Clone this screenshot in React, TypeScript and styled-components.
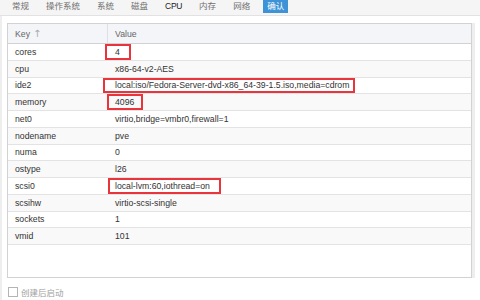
import React from 'react';
import styled, { createGlobalStyle } from 'styled-components';

const GlobalStyle = createGlobalStyle`
  html, body {
    margin: 0;
    padding: 0;
    background: #ffffff;
    font-family: "Liberation Sans", Arial, "Noto Sans CJK SC", sans-serif;
  }
`;

const Page = styled.div`
  width: 480px;
  height: 300px;
  overflow: hidden;
  display: flex;
  flex-direction: column;
`;

const TabBar = styled.div`
  height: 16px;
  display: flex;
  align-items: flex-start;
  gap: 9px;
  padding-left: 8px;
  background: #f5f5f5;
  border-bottom: 1px solid #e2e2e2;
  box-sizing: border-box;
`;

const Tab = styled.div<{ $active?: boolean; $latin?: boolean }>`
  height: 13px;
  line-height: 13px;
  padding: 0 4px;
  font-size: 8.5px;
  letter-spacing: ${(p) => (p.$latin ? '-0.3px' : '0')};
  font-family: "Liberation Sans", "Noto Sans CJK SC", sans-serif;
  color: ${(p) => (p.$active ? '#ffffff' : p.$latin ? '#222222' : '#707070')};
  background: ${(p) => (p.$active ? '#3d93d6' : 'transparent')};
`;

const Panel = styled.div`
  flex: 1;
  display: flex;
  flex-direction: column;
  padding: 7px 5px 0 5px;
  border-left: 2px solid #eeeeee;
`;

const GridWrap = styled.div`
  height: 255px;
  border-right: 3px solid #eeeeee;
  box-sizing: border-box;
`;

const Grid = styled.div`
  height: 100%;
  border: 1px solid #d2d2d2;
  box-sizing: border-box;
  display: flex;
  flex-direction: column;
`;

const HeaderRow = styled.div`
  height: 20px;
  display: grid;
  grid-template-columns: 100px 1fr;
  background: #f3f5f8;
  border-bottom: 1px solid #d2d2d2;
  box-sizing: border-box;
`;

const HeaderCell = styled.div<{ $divider?: boolean }>`
  display: flex;
  align-items: center;
  gap: 3px;
  padding-left: 7px;
  font-size: 8.7px;
  color: #666666;
  border-right: ${(p) => (p.$divider ? '1px solid #dcdfe3' : 'none')};
`;

const SortArrow = styled.span`
  color: #aaaaaa;
  font-family: "DejaVu Sans", sans-serif;
  font-size: 10px;
  line-height: 10px;
`;

const Row = styled.div<{ $odd: boolean }>`
  height: 16.75px;
  display: grid;
  grid-template-columns: 100px 1fr;
  background: ${(p) => (p.$odd ? '#f9f9f9' : '#ffffff')};
  border-bottom: 1px solid #e3e3e3;
  box-sizing: border-box;
`;

const Cell = styled.div`
  position: relative;
  display: flex;
  align-items: center;
  padding-left: 7px;
  font-size: 8.7px;
  color: #333333;
  white-space: nowrap;
`;

const Mark = styled.div<{ $left: number; $width: number }>`
  position: absolute;
  top: 0;
  bottom: 0;
  left: ${(p) => p.$left}px;
  width: ${(p) => p.$width}px;
  border: 2px solid #e8343a;
  box-sizing: border-box;
`;

const Footer = styled.label`
  display: flex;
  align-items: center;
  gap: 3px;
  padding: 8px 0 0 1px;
  font-size: 8.5px;
  font-family: "Noto Sans CJK SC", sans-serif;
  color: #a0a0a0;
`;

const CheckBox = styled.span`
  width: 8px;
  height: 8px;
  border: 1px solid #b4b4b4;
  background: #ffffff;
`;

type Item = { key: string; value: string; mark?: [number, number] };

const items: Item[] = [
  { key: 'cores', value: '4', mark: [-3, 26] },
  { key: 'cpu', value: 'x86-64-v2-AES' },
  { key: 'ide2', value: 'local:iso/Fedora-Server-dvd-x86_64-39-1.5.iso,media=cdrom', mark: [-5, 252] },
  { key: 'memory', value: '4096', mark: [-1, 36] },
  { key: 'net0', value: 'virtio,bridge=vmbr0,firewall=1' },
  { key: 'nodename', value: 'pve' },
  { key: 'numa', value: '0' },
  { key: 'ostype', value: 'l26' },
  { key: 'scsi0', value: 'local-lvm:60,iothread=on', mark: [0, 113] },
  { key: 'scsihw', value: 'virtio-scsi-single' },
  { key: 'sockets', value: '1' },
  { key: 'vmid', value: '101' },
];

const tabs = ['常规', '操作系统', '系统', '磁盘', 'CPU', '内存', '网络', '确认'];

const App = () => {
  return (
    <Page>
      <GlobalStyle />
      <TabBar>
        {tabs.map((t) => (
          <Tab key={t} $active={t === '确认'} $latin={t === 'CPU'}>
            {t}
          </Tab>
        ))}
      </TabBar>
      <Panel>
        <GridWrap>
          <Grid>
            <HeaderRow>
              <HeaderCell $divider>
                Key <SortArrow>↑</SortArrow>
              </HeaderCell>
              <HeaderCell>Value</HeaderCell>
            </HeaderRow>
            {items.map((it, i) => (
              <Row key={it.key} $odd={i % 2 === 1}>
                <Cell>{it.key}</Cell>
                <Cell>
                  {it.value}
                  {it.mark && <Mark $left={it.mark[0]} $width={it.mark[1]} />}
                </Cell>
              </Row>
            ))}
          </Grid>
        </GridWrap>
        <Footer>
          <CheckBox />
          创建后启动
        </Footer>
      </Panel>
    </Page>
  );
};

export default App;
